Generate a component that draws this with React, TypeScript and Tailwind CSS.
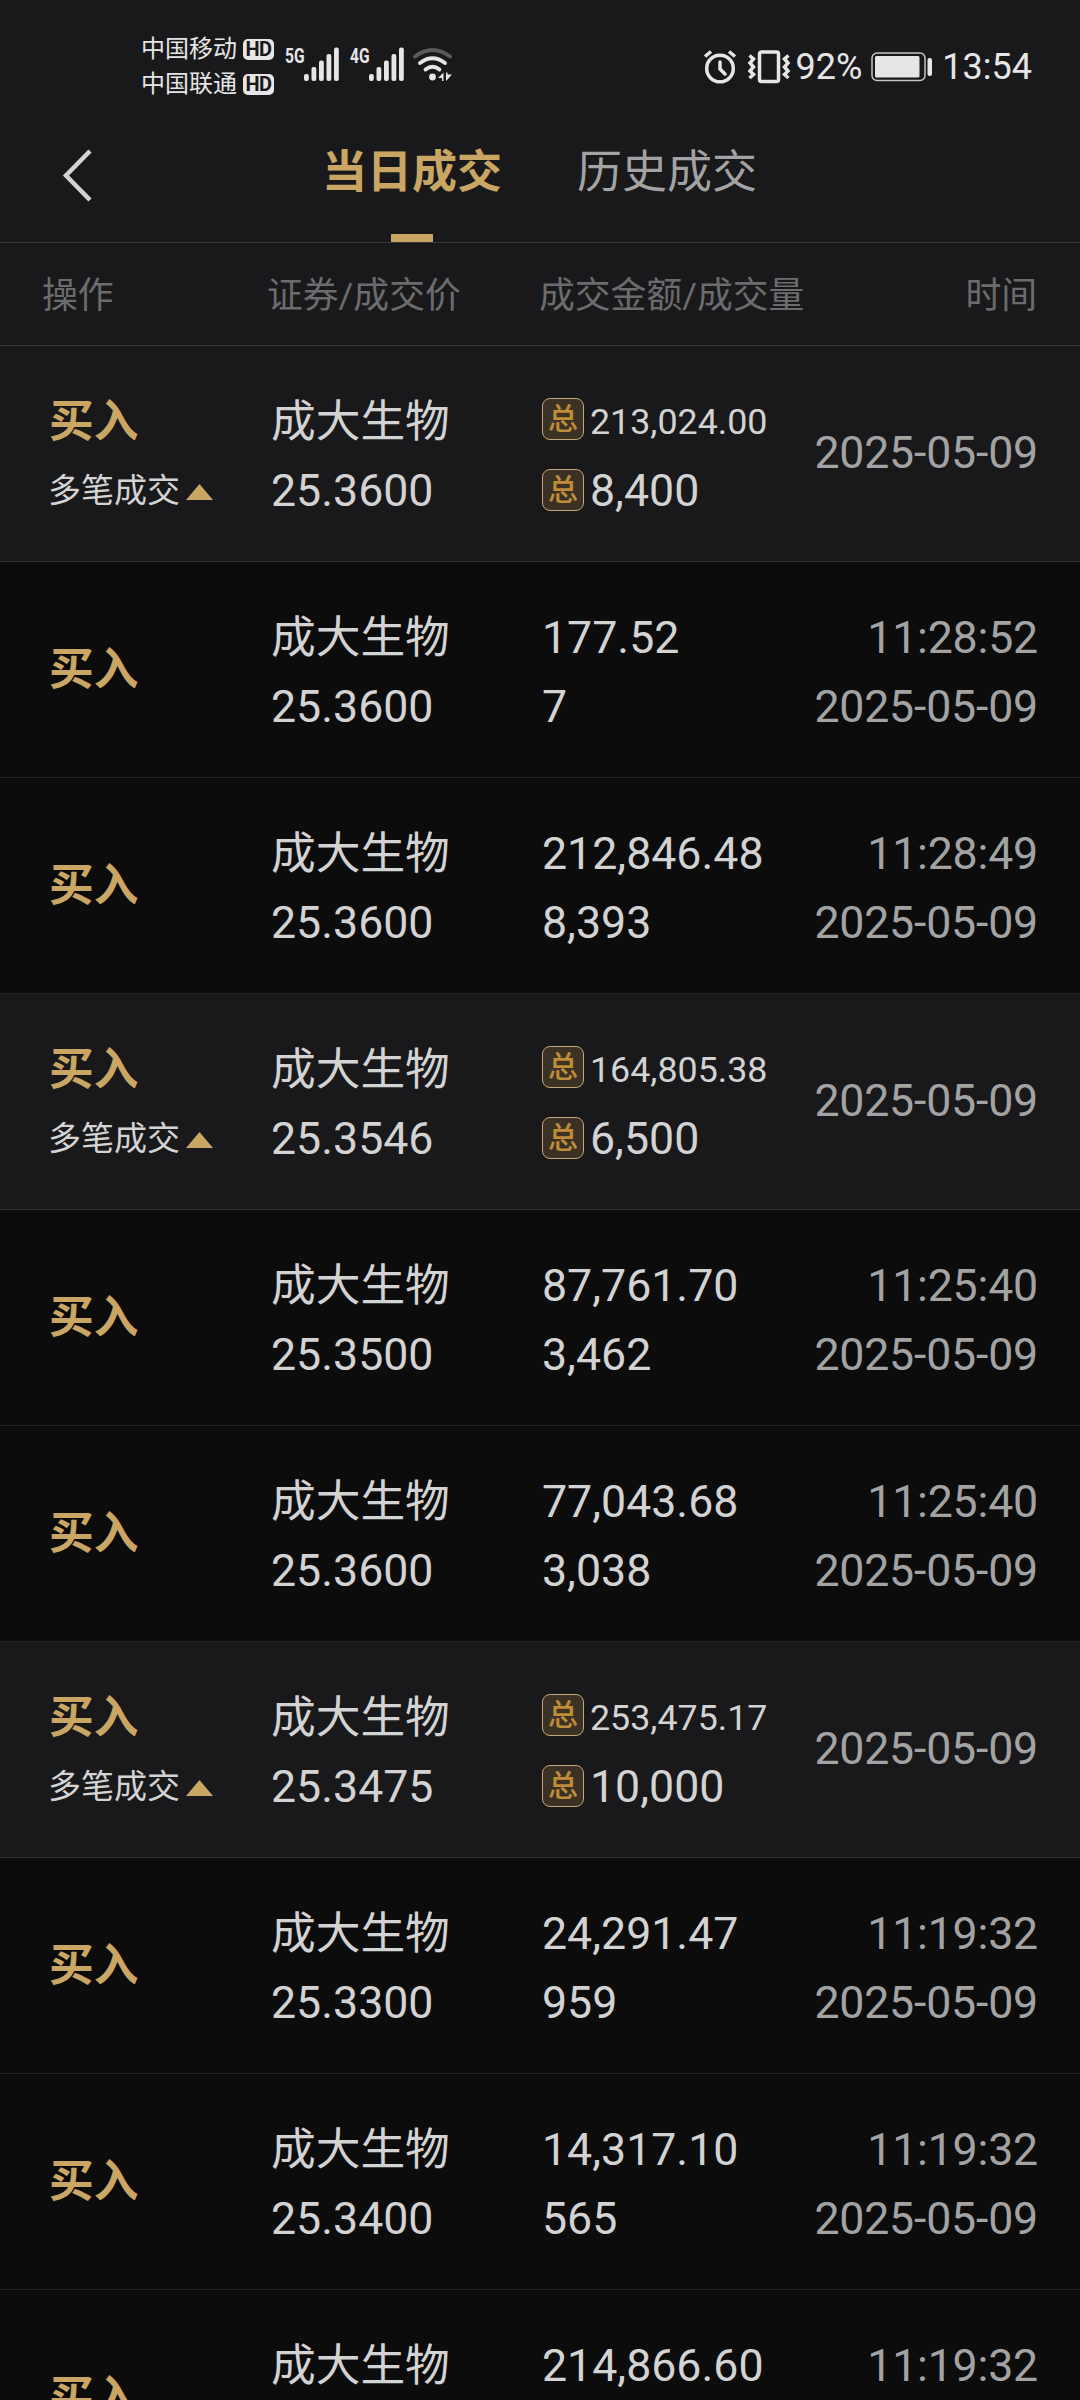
type Trade = {
  price: string;
  amount: string;
  volume: string;
  time?: string;
};

const DATE = "2025-05-09";

// a trade without a time is the summary of the rows that follow it
const trades: Trade[] = [
  { price: "25.3600", amount: "213,024.00", volume: "8,400" },
  { price: "25.3600", amount: "177.52", volume: "7", time: "11:28:52" },
  { price: "25.3600", amount: "212,846.48", volume: "8,393", time: "11:28:49" },
  { price: "25.3546", amount: "164,805.38", volume: "6,500" },
  { price: "25.3500", amount: "87,761.70", volume: "3,462", time: "11:25:40" },
  { price: "25.3600", amount: "77,043.68", volume: "3,038", time: "11:25:40" },
  { price: "25.3475", amount: "253,475.17", volume: "10,000" },
  { price: "25.3300", amount: "24,291.47", volume: "959", time: "11:19:32" },
  { price: "25.3400", amount: "14,317.10", volume: "565", time: "11:19:32" },
  { price: "25.3400", amount: "214,866.60", volume: "8,479", time: "11:19:32" },
];

export default function App() {
  return (
    <main className="flex h-[2400px] w-[1080px] flex-col overflow-hidden bg-[#0c0c0c] font-['Roboto','Noto_Sans_CJK_SC',sans-serif] text-[#d3d3d3]">
      <StatusBar />
      <TabBar />
      <section className="flex h-[103px] shrink-0 items-center border-b border-[#38383a] bg-[#19191b] pt-[6px] pr-[43px] pl-[42px] text-[35.8px] text-[#6c6c6e]">
        <span className="w-[225px]">操作</span>
        <span className="w-[272px]">证券/成交价</span>
        <span>成交金额/成交量</span>
        <span className="ml-auto">时间</span>
      </section>
      {trades.map((trade, i) =>
        trade.time ? (
          <TradeRow key={i} trade={trade} />
        ) : (
          <SummaryRow key={i} trade={trade} />
        )
      )}
    </main>
  );
}

const TradeRow = ({ trade }: { trade: Trade }) => {
  return (
    <div className="flex h-[216px] shrink-0 border-b border-[#242425] pt-[42px] pr-[42px] pl-[49px] text-[44.7px] leading-[69px]">
      <div className="w-[222px] pt-[32px] font-bold text-[#c9a664]">买入</div>
      <Security price={trade.price} />
      <div className="pl-px">
        <p>{trade.amount}</p>
        <p>{trade.volume}</p>
      </div>
      <div className="ml-auto text-right tracking-[-0.2px] text-[#a3a3a3]">
        <p>{trade.time}</p>
        <p>{DATE}</p>
      </div>
    </div>
  );
};

const SummaryRow = ({ trade }: { trade: Trade }) => {
  return (
    <div className="flex h-[216px] shrink-0 border-b border-[#303032] bg-[#19191b] pt-[42px] pr-[42px] pl-[49px] text-[44.7px] leading-[69px]">
      <div className="w-[222px]">
        <p className="font-bold text-[#c9a664]">买入</p>
        <div className="-ml-px flex items-center text-[33px] leading-[67px]">
          多笔成交
          <svg className="mt-[2px] ml-[6px]" width="27" height="16">
            <path d="M13.5 0L27 16H0z" fill="#c9a664" />
          </svg>
        </div>
      </div>
      <Security price={trade.price} />
      <div>
        <div className="flex h-[69px] items-start pt-[10px]">
          <TotalBadge />
          <span className="text-[35.8px] leading-[48px]">{trade.amount}</span>
        </div>
        <div className="flex h-[69px] items-start pt-[12px]">
          <TotalBadge />
          <span className="leading-[45px]">{trade.volume}</span>
        </div>
      </div>
      <div className="ml-auto pt-[31px] tracking-[-0.2px] text-[#a3a3a3]">
        {DATE}
      </div>
    </div>
  );
};

const Security = ({ price }: { price: string }) => {
  return (
    <div className="w-[270px]">
      <p>成大生物</p>
      <p>{price}</p>
    </div>
  );
};

const TotalBadge = () => {
  return (
    <span className="mr-[6px] ml-px flex h-[42px] w-[42px] shrink-0 items-center justify-center rounded-lg border border-[#c5a878] bg-[#3b3225] text-[30px] leading-none font-medium text-[#be8d38]">
      总
    </span>
  );
};

const TabBar = () => {
  return (
    <nav className="flex h-[133px] shrink-0 border-b border-[#38383a] bg-[#19191b] text-[45px] leading-[68px]">
      <svg
        className="mt-[37px] ml-[60px]"
        width="36"
        height="56"
        fill="none"
        stroke="#d3d3d3"
        strokeWidth="4.5"
      >
        <path d="M30 4L6 28.500L30 53" />
      </svg>
      <div className="ml-[226px] flex flex-col items-center pt-[29px] text-[#c9a664]">
        <span className="font-bold">当日成交</span>
        <span className="mt-auto h-2 w-[42px] bg-[#c9a664]" />
      </div>
      <span className="ml-[75px] pt-[29px] text-[#a3a3a3]">历史成交</span>
    </nav>
  );
};

const StatusBar = () => {
  return (
    <header className="flex h-[110px] shrink-0 bg-[#19191b] text-[#e6e6e6]">
      <div className="ml-[141px] pt-[32px] text-[24px] leading-[35px]">
        <Carrier name="中国移动" />
        <Carrier name="中国联通" />
      </div>
      <Signal label="5G" />
      <Signal label="4G" />
      <WifiIcon />
      <div className="mt-[45px] mr-[48px] ml-auto flex h-[44px] items-center text-[36px]">
        <AlarmIcon />
        <VibrateIcon />
        <span className="ml-[5px]">92%</span>
        <BatteryIcon />
        <span className="ml-[9px]">13:54</span>
      </div>
    </header>
  );
};

const Carrier = ({ name }: { name: string }) => {
  return (
    <div className="flex h-[35px] items-center">
      {name}
      <span className="-mt-px ml-[6px] flex h-[21px] w-[31px] items-center justify-center rounded-[5px] bg-[#e6e6e6] text-[20px] leading-none font-bold tracking-[-0.5px] text-[#19191b]">
        HD
      </span>
    </div>
  );
};

const Signal = ({ label }: { label: string }) => {
  return (
    <div className="ml-[11px] flex w-[54px] pt-[47px]">
      <span className="w-[19px] origin-left scale-x-[0.76] text-[20.5px] leading-[18px] font-bold">
        {label}
      </span>
      <svg className="shrink-0" width="36" height="36" fill="currentColor">
        <rect x="0" y="27" width="4.800" height="7" rx="2" />
        <rect x="7.500" y="20" width="4.800" height="14" rx="2" />
        <rect x="15" y="13.500" width="4.800" height="20.500" rx="2" />
        <rect x="22.500" y="7" width="4.800" height="27" rx="2" />
        <rect x="30" y="0.500" width="4.800" height="33.500" rx="2" />
      </svg>
    </div>
  );
};

const WifiIcon = () => {
  return (
    <svg
      className="mt-[47px] ml-[8px]"
      width="42"
      height="36"
      fill="none"
      stroke="currentColor"
      strokeWidth="3.800"
      strokeLinecap="round"
    >
      <path d="M3 9.500Q20.500 -3.500 38 9.500" stroke="#5a5a5b" />
      <path d="M8 16Q20.500 6.500 33 16" />
      <path d="M13.500 22.500Q20.500 17 27.500 22.500" />
      <circle cx="20.500" cy="30" r="3.400" fill="currentColor" stroke="none" />
      <path
        d="M31.500 25.500v8.500h-1.500v-3h-4zM34 34v-8.500h1.500v2h4.500l-4.500 5z"
        fill="currentColor"
        stroke="none"
      />
    </svg>
  );
};

const AlarmIcon = () => {
  return (
    <svg
      width="34"
      height="34"
      fill="none"
      stroke="currentColor"
      strokeWidth="3.500"
      strokeLinecap="round"
    >
      <circle cx="17" cy="18.500" r="13.300" />
      <path d="M17 12v7l5 5" />
      <path d="M2 6.500l6-5M32 6.500l-6-5" strokeLinecap="butt" />
    </svg>
  );
};

const VibrateIcon = () => {
  return (
    <svg
      className="ml-[10px]"
      width="44"
      height="34"
      fill="none"
      stroke="currentColor"
      strokeWidth="3.500"
    >
      <rect x="12.500" y="2" width="19" height="29.500" rx="2" />
      <path d="M2.500 5.500l4 3.500-3.500 4 3.500 4-3.500 4 3.500 3.500-4 3.500M41.500 5.500l-4 3.500 3.500 4-3.500 4 3.500 4-3.500 3.500 4 3.500" />
    </svg>
  );
};

const BatteryIcon = () => {
  return (
    <svg className="ml-[9px]" width="62" height="30">
      <rect
        x="1"
        y="1"
        width="53"
        height="27.500"
        rx="5"
        fill="none"
        stroke="#c4c4c4"
        strokeWidth="1.500"
      />
      <rect x="4" y="4" width="44.500" height="21.500" rx="1.500" fill="#e6e6e6" />
      <rect x="56.500" y="6" width="4.500" height="18" rx="2" fill="#e6e6e6" />
    </svg>
  );
};
